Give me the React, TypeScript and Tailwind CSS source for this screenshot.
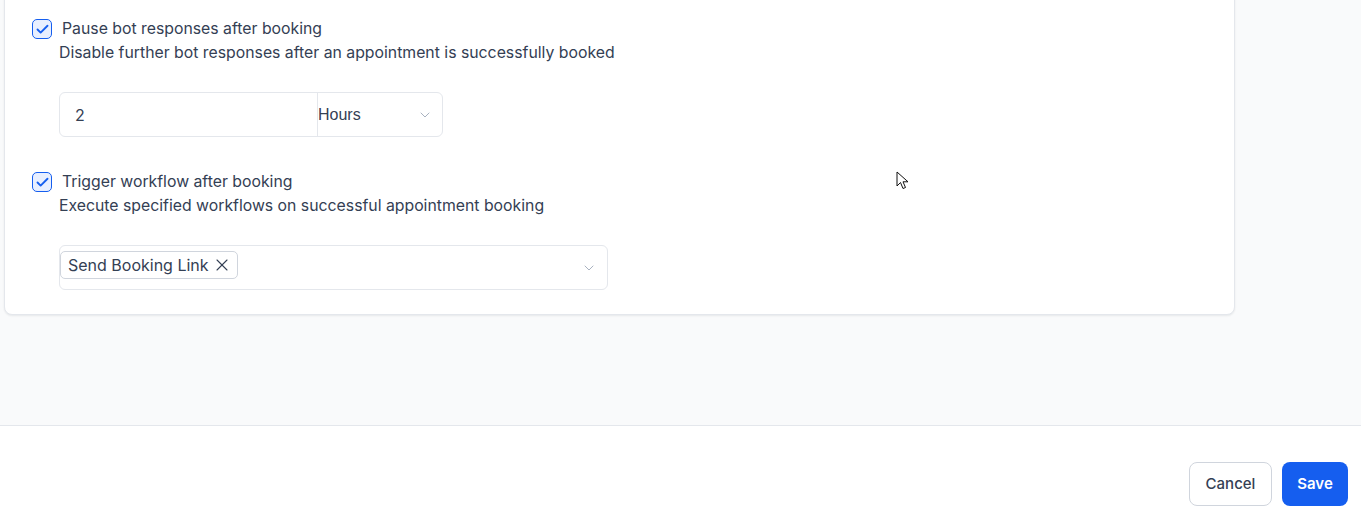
import { ChevronDown, X, Check } from "lucide-react";

function Checkbox() {
  return (
    <div className="flex h-[20px] w-[20px] shrink-0 items-center justify-center rounded-[5px] border-[1.5px] border-[#155eef] bg-[#e8efff]">
      <Check size={15} strokeWidth={3} className="text-[#155eef]" />
    </div>
  );
}

function Option({ title, desc }: { title: string; desc: string }) {
  return (
    <div>
      <div className="flex items-center gap-[10px]">
        <Checkbox />
        <span className="text-[15.8px] leading-[20px] text-[#344054]">{title}</span>
      </div>
      <p className="mt-[4px] pl-[27px] text-[15.8px] leading-[20px] text-[#344054]">{desc}</p>
    </div>
  );
}

function Cursor() {
  return (
    <svg className="absolute left-[896px] top-[171px]" width="14" height="20" viewBox="0 0 14 20">
      <path
        d="M1 1 L1 15 L4.5 11.5 L7 17.5 L9.5 16.5 L7 10.8 L12 10.8 Z"
        fill="#fff"
        stroke="#111"
        strokeWidth="1"
        strokeLinejoin="round"
      />
    </svg>
  );
}

export default function App() {
  return (
    <div className="relative flex h-[524px] flex-col overflow-hidden bg-[#f9fafb] font-['Inter',sans-serif]">
      <div className="flex-1">
        <div className="ml-[4px] mt-[-10px] w-[1231px] rounded-lg border border-[#e4e7ec] bg-white pb-[24px] pl-[27px] pt-[28px] shadow-[0_1px_2px_rgba(16,24,40,0.08)]">
          <Option
            title="Pause bot responses after booking"
            desc="Disable further bot responses after an appointment is successfully booked"
          />
          <div className="ml-[27px] mt-[29px] flex h-[45px] w-[384px] rounded-md border border-[#e4e7ec]">
            <div className="flex w-[258px] items-center border-r border-[#e4e7ec] pl-[15px] text-[16px] text-[#344054]">
              2
            </div>
            <div className="flex flex-1 items-center justify-between pr-[9px] font-['Liberation_Sans',sans-serif] text-[16px] text-[#344054]">
              <span>Hours</span>
              <ChevronDown size={16} strokeWidth={1.25} className="text-[#98a2b3]" />
            </div>
          </div>
          <div className="mt-[35px]">
            <Option
              title="Trigger workflow after booking"
              desc="Execute specified workflows on successful appointment booking"
            />
          </div>
          <div className="ml-[27px] mt-[29px] flex h-[45px] w-[549px] items-center justify-between rounded-md border border-[#e4e7ec] pr-[10px]">
            <div className="-mt-[5px] flex h-[28px] items-center gap-[3px] rounded-[5px] border border-[#d0d5dd] pl-[7px] pr-[5px] text-[16px] text-[#344054]">
              <span>Send Booking Link</span>
              <X size={20} strokeWidth={1.3} className="text-[#344054]" />
            </div>
            <ChevronDown size={16} strokeWidth={1.25} className="text-[#98a2b3]" />
          </div>
        </div>
      </div>
      <div className="flex h-[99px] justify-end gap-[10px] border-t border-[#e4e7ec] bg-white pr-[13px] pt-[36px]">
        <button className="h-[44px] w-[83px] rounded-lg border border-[#d0d5dd] bg-white text-[15px] font-medium text-[#344054]">
          Cancel
        </button>
        <button className="h-[44px] w-[66px] rounded-lg bg-[#155eef] text-[15px] font-semibold text-white">
          Save
        </button>
      </div>
      <Cursor />
    </div>
  );
}
